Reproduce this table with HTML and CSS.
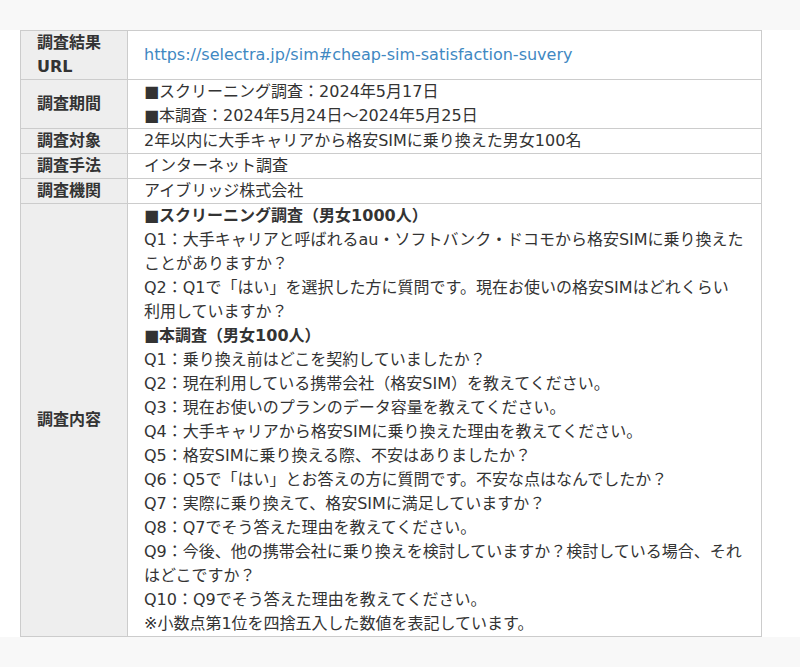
FILE: index.html
```html
<!DOCTYPE html>
<html lang="ja">
<head>
<meta charset="utf-8">
<link rel="stylesheet" href="styles.css">
</head>
<body>
<div class="band"></div>
<main class="main">
<table class="survey">
<colgroup><col class="col-head"><col></colgroup>
<tbody>
<tr><th>調査結果URL</th><td><a href="#" class="link">https://selectra.jp/sim#cheap-sim-satisfaction-suvery</a></td></tr>
<tr><th>調査期間</th><td>■スクリーニング調査：2024年5月17日<br>■本調査：2024年5月24日～2024年5月25日</td></tr>
<tr><th>調査対象</th><td>2年以内に大手キャリアから格安SIMに乗り換えた男女100名</td></tr>
<tr><th>調査手法</th><td>インターネット調査</td></tr>
<tr><th>調査機関</th><td>アイブリッジ株式会社</td></tr>
<tr><th>調査内容</th><td><strong>■スクリーニング調査（男女1000人）</strong><br>Q1：大手キャリアと呼ばれるau・ソフトバンク・ドコモから格安SIMに乗り換えたことがありますか？<br>Q2：Q1で「はい」を選択した方に質問です。現在お使いの格安SIMはどれくらい利用していますか？<br><strong>■本調査（男女100人）</strong><br>Q1：乗り換え前はどこを契約していましたか？<br>Q2：現在利用している携帯会社（格安SIM）を教えてください。<br>Q3：現在お使いのプランのデータ容量を教えてください。<br>Q4：大手キャリアから格安SIMに乗り換えた理由を教えてください。<br>Q5：格安SIMに乗り換える際、不安はありましたか？<br>Q6：Q5で「はい」とお答えの方に質問です。不安な点はなんでしたか？<br>Q7：実際に乗り換えて、格安SIMに満足していますか？<br>Q8：Q7でそう答えた理由を教えてください。<br>Q9：今後、他の携帯会社に乗り換えを検討していますか？検討している場合、それはどこですか？<br>Q10：Q9でそう答えた理由を教えてください。<br>※小数点第1位を四捨五入した数値を表記しています。</td></tr>
</tbody>
</table>
</main>
<div class="band"></div>
</body>
</html>
```
FILE: styles.css
```css
html, body {
  margin: 0;
  padding: 0;
  background: #fff;
}
body {
  font-family: "DejaVu Sans", "Noto Sans CJK JP", sans-serif;
  font-size: 16px;
  line-height: 24px;
  color: #333;
}
.band {
  height: 30px;
  background: #f8f8f8;
}
.main {
  padding: 0 20px;
}
.survey {
  width: 742px;
  border-collapse: collapse;
  table-layout: fixed;
}
.col-head {
  width: 107px;
}
.survey th,
.survey td {
  border: 1px solid #ccc;
  padding: 0 17px 0 16px;
  vertical-align: middle;
  text-align: left;
}
.survey th {
  background: #eee;
  font-weight: bold;
}
.survey strong {
  font-weight: bold;
}
.link {
  color: #4088c2;
  text-decoration: none;
}
```
